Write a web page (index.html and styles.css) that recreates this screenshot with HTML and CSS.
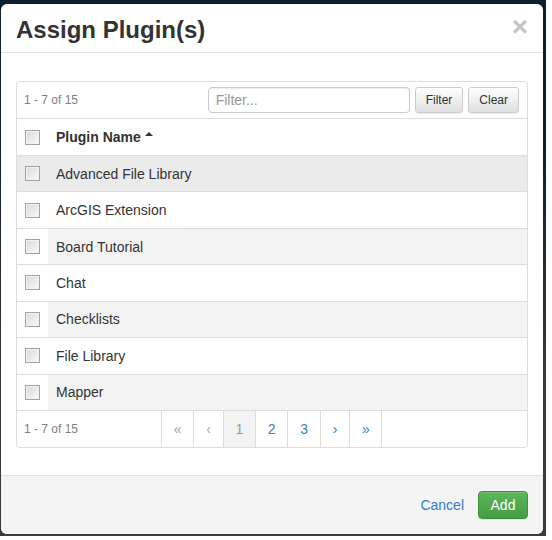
FILE: index.html
```html
<!DOCTYPE html>
<html>
<head>
<meta charset="utf-8">
<link rel="stylesheet" href="styles.css">
</head>
<body>
<div class="backdrop">
  <div class="modal">
    <div class="modal-header">
      <h4 class="modal-title">Assign Plugin(s)</h4>
      <span class="close">×</span>
    </div>
    <div class="modal-body">
      <div class="panel">
        <div class="toolbar">
          <span class="count">1 - 7 of 15</span>
          <div class="filter-group">
            <input class="filter-input" type="text" placeholder="Filter...">
            <button class="btn-sm">Filter</button>
            <button class="btn-sm">Clear</button>
          </div>
        </div>
        <div class="tr thead">
          <div class="td-cb"><span class="cb"></span></div>
          <div class="td-name"><b>Plugin Name</b><span class="caret"></span></div>
        </div>
        <div class="tr hover"><div class="td-cb"><span class="cb"></span></div><div class="td-name">Advanced File Library</div></div>
        <div class="tr"><div class="td-cb"><span class="cb"></span></div><div class="td-name">ArcGIS Extension</div></div>
        <div class="tr striped"><div class="td-cb"><span class="cb"></span></div><div class="td-name">Board Tutorial</div></div>
        <div class="tr"><div class="td-cb"><span class="cb"></span></div><div class="td-name">Chat</div></div>
        <div class="tr striped"><div class="td-cb"><span class="cb"></span></div><div class="td-name">Checklists</div></div>
        <div class="tr"><div class="td-cb"><span class="cb"></span></div><div class="td-name">File Library</div></div>
        <div class="tr striped"><div class="td-cb"><span class="cb"></span></div><div class="td-name">Mapper</div></div>
        <div class="pager-row">
          <span class="count count-cell">1 - 7 of 15</span>
          <ul class="pagination">
            <li class="disabled">«</li>
            <li class="disabled">‹</li>
            <li class="active">1</li>
            <li>2</li>
            <li>3</li>
            <li>›</li>
            <li class="last">»</li>
          </ul>
        </div>
      </div>
    </div>
    <div class="modal-footer">
      <a class="cancel" href="#">Cancel</a>
      <button class="btn-success">Add</button>
    </div>
  </div>
</div>
</body>
</html>
```
FILE: styles.css
```css
html, body {
  margin: 0;
  background: #ffffff;
}
body {
  font-family: "Liberation Sans", Arial, sans-serif;
  font-size: 14px;
  color: #333333;
}
.backdrop {
  width: 546px;
  height: 536px;
  box-sizing: border-box;
  padding: 4px 0 0 1px;
  background: linear-gradient(#0e1f2f 0px, #0e1f2f 150px, #3b3b3b 380px, #3b3b3b 100%);
}
.modal {
  width: 542px;
  height: 530px;
  background: #ffffff;
  border-radius: 6px;
  display: flex;
  flex-direction: column;
  overflow: hidden;
}
.modal-header {
  flex: none;
  height: 48px;
  border-bottom: 1px solid #e5e5e5;
  display: flex;
  align-items: center;
  justify-content: space-between;
  padding: 0 15px;
}
.modal-title {
  margin: 0;
  font-size: 24px;
  font-weight: bold;
  line-height: 26px;
  color: #333333;
  padding-top: 3px;
}
.close {
  font-size: 28px;
  font-weight: bold;
  line-height: 1;
  color: #c6c6c6;
  margin-right: 0;
  padding-bottom: 2px;
}
.modal-body {
  flex: none;
  padding: 28px 15px 27px 15px;
}
.panel {
  border: 1px solid #dddddd;
  border-radius: 4px;
  overflow: hidden;
}
.toolbar {
  height: 36px;
  border-bottom: 1px solid #dddddd;
  display: flex;
  align-items: center;
  justify-content: space-between;
  padding: 0 8px 0 7px;
}
.count {
  font-size: 12px;
  color: #808080;
}
.filter-group {
  display: flex;
  gap: 5px;
  align-items: center;
}
.filter-input {
  width: 202px;
  height: 26px;
  box-sizing: border-box;
  border: 1px solid #cccccc;
  border-radius: 4px;
  box-shadow: inset 0 1px 1px rgba(0,0,0,0.075);
  padding: 0 7px;
  font-family: "Liberation Sans", Arial, sans-serif;
  font-size: 14px;
  color: #555555;
  margin: 0;
}
.filter-input::placeholder {
  color: #999999;
}
.btn-sm {
  height: 26px;
  box-sizing: border-box;
  padding: 0 10px;
  margin: 0;
  font-family: "Liberation Sans", Arial, sans-serif;
  font-size: 12px;
  color: #333333;
  border: 1px solid #cccccc;
  border-radius: 3px;
  background: linear-gradient(#ffffff, #e0e0e0);
  box-shadow: inset 0 1px 0 rgba(255,255,255,0.15), 0 1px 1px rgba(0,0,0,0.075);
}
.tr {
  display: flex;
  height: 36.43px;
  box-sizing: border-box;
  border-bottom: 1px solid #dddddd;
}
.tr.thead {
  height: 37px;
}
.td-cb {
  width: 31px;
  flex: none;
  display: flex;
  align-items: center;
  justify-content: center;
}
.td-name {
  flex: 1;
  display: flex;
  align-items: center;
  padding-left: 8px;
}
.tr.striped .td-name {
  background: #f3f3f3;
}
.tr.hover {
  background: #ebebeb;
}
.cb {
  width: 13px;
  height: 13px;
  border: 1px solid #a3a3a3;
  background: linear-gradient(135deg, #d8d8d8 0%, #f0f0f0 70%, #fbfbfb 100%);
  box-shadow: inset 0 0 0 1px #f2f2f2;
}
.caret {
  width: 0;
  height: 0;
  border-left: 4px solid transparent;
  border-right: 4px solid transparent;
  border-bottom: 4px solid #333333;
  margin-left: 4px;
  margin-bottom: 6px;
}
.pager-row {
  height: 36px;
  display: flex;
}
.count-cell {
  width: 144px;
  box-sizing: border-box;
  padding-left: 7px;
  display: flex;
  align-items: center;
  flex: none;
}
.pagination {
  list-style: none;
  margin: 0;
  padding: 0;
  display: flex;
}
.pagination li {
  border-left: 1px solid #dddddd;
  padding: 0 11.8px;
  line-height: 36px;
  font-size: 14px;
  color: #2f82c4;
}
.pagination li.last {
  border-right: 1px solid #dddddd;
}
.pagination li.disabled {
  color: #a8a8a8;
}
.pagination li.active {
  color: #999999;
  background: #f3f3f3;
}
.modal-footer {
  flex: 1;
  background: #f4f4f4;
  border-top: 1px solid #e2e2e2;
  display: flex;
  justify-content: flex-end;
  align-items: center;
  gap: 14px;
  padding: 0 15px;
}
.cancel {
  color: #2f82c4;
  text-decoration: none;
  font-size: 14px;
}
.btn-success {
  width: 50px;
  height: 28px;
  margin: 0;
  padding: 0;
  font-family: "Liberation Sans", Arial, sans-serif;
  font-size: 14px;
  color: #ffffff;
  border: 1px solid #3e8f3e;
  border-radius: 4px;
  background: linear-gradient(#5cb85c, #449d44);
  box-shadow: inset 0 1px 0 rgba(255,255,255,0.15), 0 1px 1px rgba(0,0,0,0.075);
}
```
